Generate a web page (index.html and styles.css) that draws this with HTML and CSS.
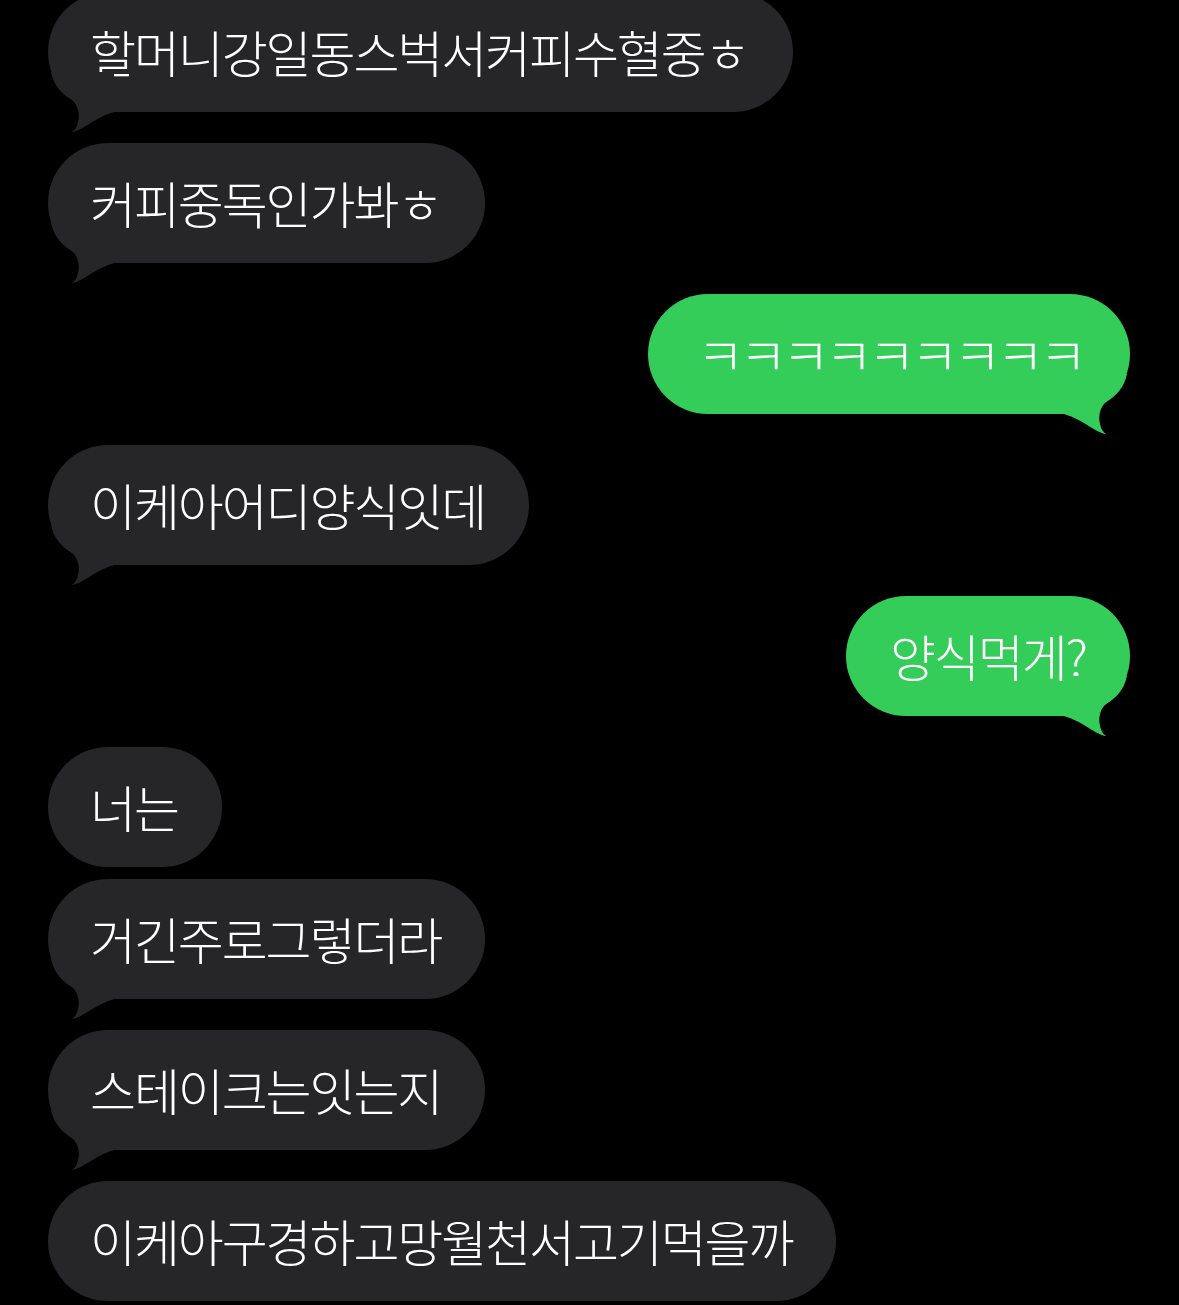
FILE: index.html
```html
<!DOCTYPE html>
<html lang="ko">
<head>
    <meta charset="UTF-8">
    <meta name="viewport" content="width=device-width, initial-scale=1.0">
    <title>메시지</title>
    <link rel="stylesheet" href="styles.css">
</head>
<body>
    <div class="chat">
        <div class="bubble them tail">할머니강일동스벅서커피수혈중ㅎ
            <svg class="tail-shape" viewBox="0 0 70 60"><path d="M3 0 C6 14 14 22 24 28 C30 33 32 42 30 50 C29 55 27 58 24 60 C34 59 46 46 66 40 L66 0 Z"/></svg>
        </div>
        <div class="bubble them tail">커피중독인가봐ㅎ
            <svg class="tail-shape" viewBox="0 0 70 60"><path d="M3 0 C6 14 14 22 24 28 C30 33 32 42 30 50 C29 55 27 58 24 60 C34 59 46 46 66 40 L66 0 Z"/></svg>
        </div>
        <div class="bubble me tail kk">ㅋㅋㅋㅋㅋㅋㅋㅋㅋ
            <svg class="tail-shape" viewBox="0 0 70 60"><path d="M3 0 C6 14 14 22 24 28 C30 33 32 42 30 50 C29 55 27 58 24 60 C34 59 46 46 66 40 L66 0 Z"/></svg>
        </div>
        <div class="bubble them tail">이케아어디양식잇데
            <svg class="tail-shape" viewBox="0 0 70 60"><path d="M3 0 C6 14 14 22 24 28 C30 33 32 42 30 50 C29 55 27 58 24 60 C34 59 46 46 66 40 L66 0 Z"/></svg>
        </div>
        <div class="bubble me tail">양식먹게?
            <svg class="tail-shape" viewBox="0 0 70 60"><path d="M3 0 C6 14 14 22 24 28 C30 33 32 42 30 50 C29 55 27 58 24 60 C34 59 46 46 66 40 L66 0 Z"/></svg>
        </div>
        <div class="bubble them">너는</div>
        <div class="bubble them tail">거긴주로그렇더라
            <svg class="tail-shape" viewBox="0 0 70 60"><path d="M3 0 C6 14 14 22 24 28 C30 33 32 42 30 50 C29 55 27 58 24 60 C34 59 46 46 66 40 L66 0 Z"/></svg>
        </div>
        <div class="bubble them tail">스테이크는잇는지
            <svg class="tail-shape" viewBox="0 0 70 60"><path d="M3 0 C6 14 14 22 24 28 C30 33 32 42 30 50 C29 55 27 58 24 60 C34 59 46 46 66 40 L66 0 Z"/></svg>
        </div>
        <div class="bubble them">이케아구경하고망월천서고기먹을까</div>
    </div>
</body>
</html>
```

FILE: styles.css
```css
html, body {
    background-color: #000;
}
body {
    margin: 0;
    font-family: "Noto Sans CJK KR", "Noto Sans", sans-serif;
    font-weight: 300;
    color: #fff;
    overflow: hidden;
}
.chat {
    display: flex;
    flex-direction: column;
    align-items: flex-start;
    padding: 0 49px 0 48px;
    margin-top: -8px;
}
.bubble {
    position: relative;
    height: 120px;
    box-sizing: border-box;
    display: flex;
    align-items: center;
    padding: 0 44px 2px 42px;
    border-radius: 60px;
    font-size: 50px;
    letter-spacing: -2.1px;
    line-height: 1;
    margin-bottom: 12px;
    white-space: nowrap;
}
.bubble.tail {
    margin-bottom: 31px;
}
.them {
    background-color: #262629;
}
.me {
    align-self: flex-end;
    background-color: #35cd5a;
    padding-left: 44px;
}
.kk {
    font-size: 52px;
    letter-spacing: -5px;
    padding: 0 48px 0 48px;
}
/* 말풍선 꼬리 */
.tail-shape {
    position: absolute;
    width: 70px;
    height: 60px;
    bottom: -20px;
    left: 0;
    z-index: 0;
}
.them .tail-shape {
    fill: #262629;
}
.me .tail-shape {
    fill: #35cd5a;
    left: auto;
    right: 0;
    transform: scaleX(-1);
}
```
